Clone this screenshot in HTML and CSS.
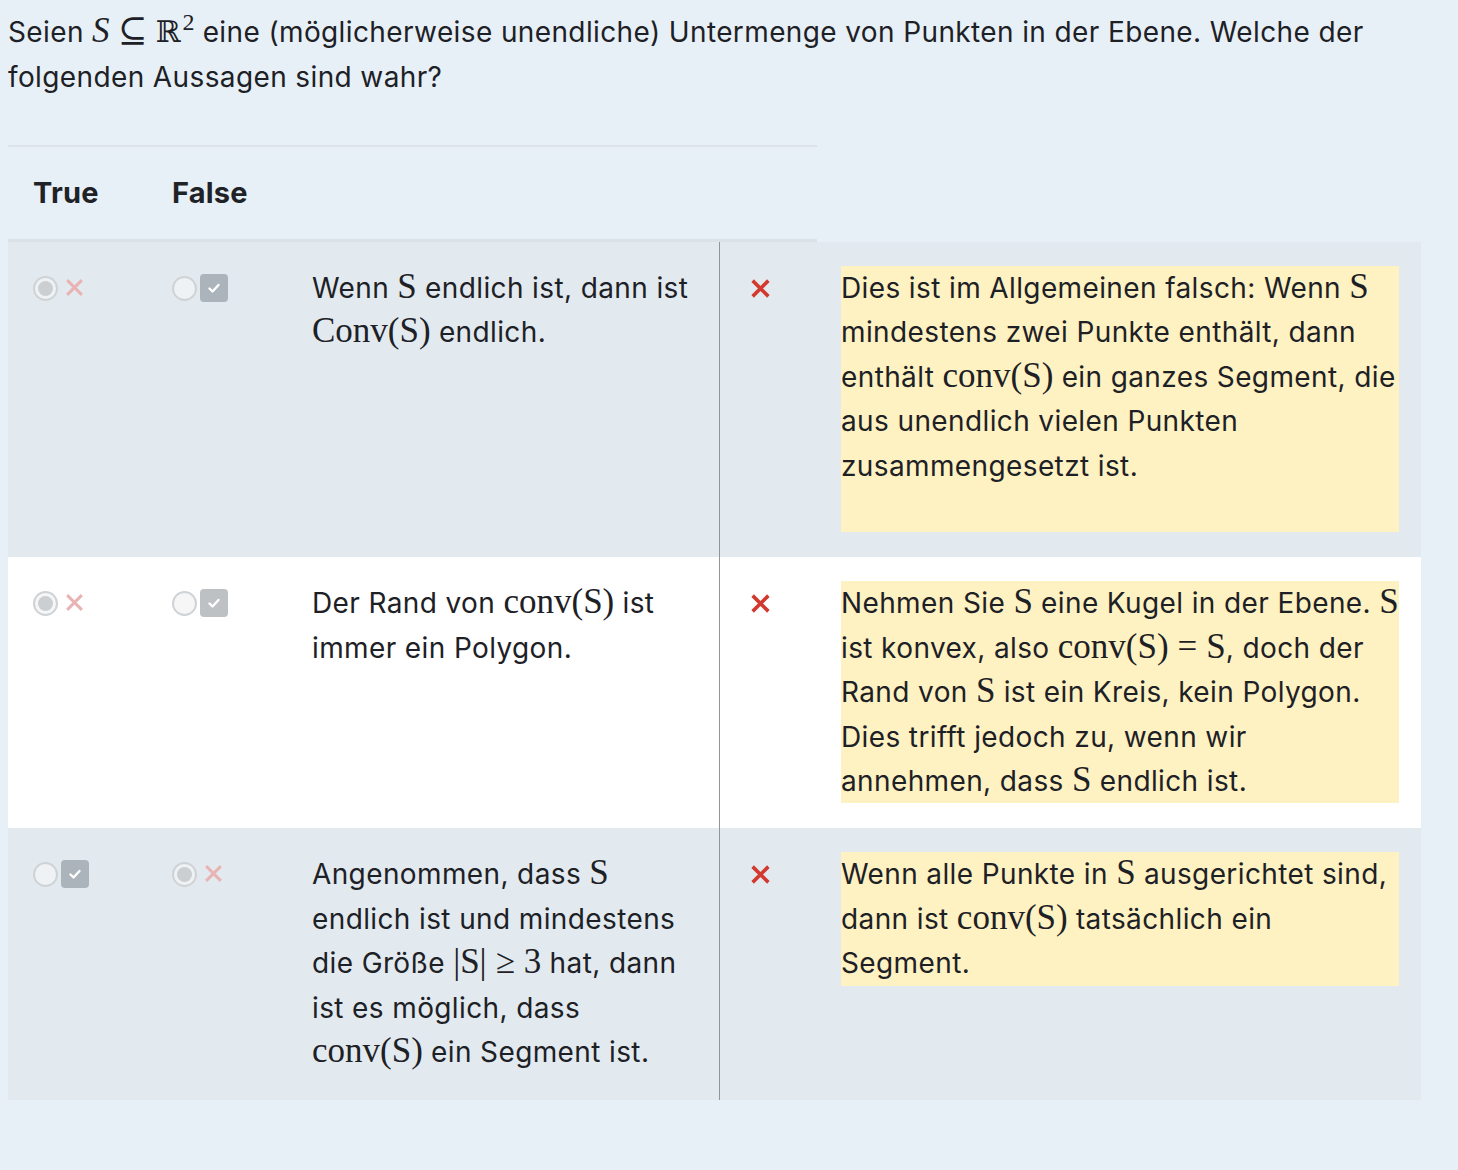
FILE: index.html
```html
<!DOCTYPE html>
<html lang="de">
<head>
<meta charset="utf-8">
<title>Quiz</title>
<link rel="stylesheet" href="styles.css">
</head>
<body>
<div class="page">
  <p class="question">Seien <span class="m mi">S</span> <span class="m">⊆</span> <span class="m bb">ℝ<sup>2</sup></span> eine (möglicherweise unendliche) Untermenge von Punkten in der Ebene. Welche der folgenden Aussagen sind wahr?</p>

  <div class="head">
    <div class="hcell">True</div>
    <div class="hcell">False</div>
    <div class="hcell"></div>
    <div class="hcell"></div>
  </div>

  <div class="row shaded">
    <div class="cell choice">
      <span class="radio on"></span>
      <svg class="wrong" viewBox="0 0 20 20"><path d="M3 3L17 17M17 3L3 17"/></svg>
    </div>
    <div class="cell choice">
      <span class="radio"></span>
      <span class="box"><svg viewBox="0 0 20 20"><path d="M5.5 10.5L8.5 13.5L14.5 7"/></svg></span>
    </div>
    <div class="cell stmt">Wenn <span class="m">S</span> endlich ist, dann ist <span class="m">Conv(S)</span> endlich.</div>
    <div class="cell mark"><svg class="x" viewBox="0 0 20 20"><path d="M2.5 2.5L17.5 17.5M17.5 2.5L2.5 17.5"/></svg></div>
    <div class="cell fb"><div class="note">Dies ist im Allgemeinen falsch: Wenn <span class="m">S</span> mindestens zwei Punkte enthält, dann enthält <span class="m">conv(S)</span> ein ganzes Segment, die aus unendlich vielen Punkten zusammengesetzt ist.<br>&nbsp;</div></div>
  </div>

  <div class="row plain">
    <div class="cell choice">
      <span class="radio on"></span>
      <svg class="wrong" viewBox="0 0 20 20"><path d="M3 3L17 17M17 3L3 17"/></svg>
    </div>
    <div class="cell choice">
      <span class="radio"></span>
      <span class="box"><svg viewBox="0 0 20 20"><path d="M5.5 10.5L8.5 13.5L14.5 7"/></svg></span>
    </div>
    <div class="cell stmt">Der Rand von <span class="m">conv(S)</span> ist immer ein Polygon.</div>
    <div class="cell mark"><svg class="x" viewBox="0 0 20 20"><path d="M2.5 2.5L17.5 17.5M17.5 2.5L2.5 17.5"/></svg></div>
    <div class="cell fb"><div class="note">Nehmen Sie <span class="m">S</span> eine Kugel in der Ebene. <span class="m">S</span> ist konvex, also <span class="m nw">conv(S)<span class="rel">=</span>S</span>, doch der Rand von <span class="m">S</span> ist ein Kreis, kein Polygon. Dies trifft jedoch zu, wenn wir annehmen, dass <span class="m">S</span> endlich ist.</div></div>
  </div>

  <div class="row shaded">
    <div class="cell choice">
      <span class="radio"></span>
      <span class="box"><svg viewBox="0 0 20 20"><path d="M5.5 10.5L8.5 13.5L14.5 7"/></svg></span>
    </div>
    <div class="cell choice">
      <span class="radio on"></span>
      <svg class="wrong" viewBox="0 0 20 20"><path d="M3 3L17 17M17 3L3 17"/></svg>
    </div>
    <div class="cell stmt">Angenommen, dass <span class="m">S</span> endlich ist und mindestens die Größe <span class="m nw">|S|<span class="rel">≥</span>3</span> hat, dann ist es möglich, dass <span class="m">conv(S)</span> ein Segment ist.</div>
    <div class="cell mark"><svg class="x" viewBox="0 0 20 20"><path d="M2.5 2.5L17.5 17.5M17.5 2.5L2.5 17.5"/></svg></div>
    <div class="cell fb"><div class="note">Wenn alle Punkte in <span class="m">S</span> ausgerichtet sind, dann ist <span class="m">conv(S)</span> tatsächlich ein Segment.</div></div>
  </div>
</div>
</body>
</html>
```

FILE: styles.css
```css
html, body {
  margin: 0;
  padding: 0;
  background: #e8f0f7;
}
body {
  padding: 10px 8px 8px 8px;
  font-family: Inter, "Noto Sans", sans-serif;
  font-size: 28px;
  letter-spacing: 0.38px;
  line-height: 44.4px;
  color: #1d2126;
}
.question {
  margin: 0 0 45px 0;
  line-height: 45px;
}
.m {
  font-family: "Liberation Serif", "DejaVu Serif", serif;
  font-size: 35px;
  letter-spacing: 0;
  line-height: 1;
}
.rel {
  margin: 0 9px;
}
.nw { white-space: nowrap; }
.mi { font-style: italic; }
.bb { font-family: "DejaVu Serif", serif; font-size: 30px; }
.bb sup { font-family: "Liberation Serif", serif; font-size: 24px; line-height: 0; vertical-align: 12px; margin-left: 2px; }

.head {
  width: 809px;
  display: grid;
  grid-template-columns: 139px 140px 433px 97px;
  border-top: 2px solid #dbe3e9;
  border-bottom: 3px solid #dae2e7;
  height: 97px;
  box-sizing: border-box;
  align-items: center;
}
.hcell {
  padding: 0 25px;
  font-weight: 700;
  font-size: 29px;
  letter-spacing: 0.2px;
  color: #1f2328;
}

.row {
  width: 1413px;
  display: grid;
  grid-template-columns: 139px 140px 433px 96px 605px;
}
.row.shaded { background: #e2eaef; }
.row.plain { background: #ffffff; }

.cell {
  padding: 24px 25px 25px 25px;
}
.choice {
  display: flex;
  align-items: flex-start;
  padding-top: 34px;
}
.radio {
  width: 21px;
  height: 21px;
  border: 2px solid #cfd3d6;
  border-radius: 50%;
  background: #eef2f4;
  display: flex;
  align-items: center;
  justify-content: center;
  flex: none;
}
.plain .radio { background: #f6f6f6; }
.radio.on::after {
  content: "";
  width: 15px;
  height: 15px;
  border-radius: 50%;
  background: #cbcfd2;
}
.wrong {
  width: 21px;
  height: 21px;
  margin-left: 6px;
  margin-top: 1px;
  fill: none;
  stroke: #eab3b3;
  stroke-width: 2.8;
}
.box {
  width: 28px;
  height: 28px;
  margin-left: 3px;
  margin-top: -2px;
  border-radius: 4px;
  background: rgba(90, 100, 108, 0.4);
  display: flex;
  align-items: center;
  justify-content: center;
}
.box svg {
  width: 20px;
  height: 20px;
  fill: none;
  stroke: #ffffff;
  stroke-width: 2.4;
  stroke-linecap: round;
  stroke-linejoin: round;
}
.stmt {
  border-right: 1px solid #8f959a;
}
.mark {
  padding-left: 30px;
  padding-top: 36px;
}
.x {
  display: block;
  width: 21px;
  height: 21px;
  fill: none;
  stroke: #d23a2f;
  stroke-width: 3.4;
}
.fb {
  padding-right: 22px;
}
.note {
  background: #fff2c2;
}
```
